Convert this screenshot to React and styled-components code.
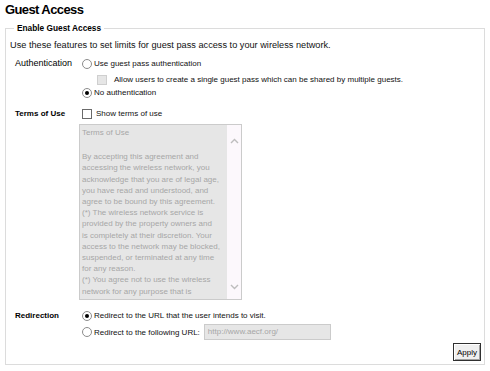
import React from "react";
import styled, { createGlobalStyle } from "styled-components";

const GlobalStyle = createGlobalStyle`
  body {
    margin: 0;
    background: #fff;
    color: #111;
    font-family: "Liberation Sans", Arial, sans-serif;
  }
`;

const Page = styled.div`
  width: 490px;
  height: 371px;
  overflow: hidden;
`;

const Title = styled.h1`
  margin: 0;
  padding: 0 5px;
  font-size: 13px;
  line-height: 20px;
  font-weight: bold;
  letter-spacing: -0.6px;
  color: #000;
`;

const Fieldset = styled.fieldset`
  margin: 2px 5px 0;
  padding: 5px 3px 3px 4px;
  border: 1px solid #dcdcdc;
  min-width: 0;
`;

const Legend = styled.legend`
  margin-left: 4px;
  padding: 0 3px;
  font-size: 8.3px;
  line-height: 12px;
  font-weight: bold;
  color: #000;
`;

const Intro = styled.div`
  font-size: 9.2px;
  line-height: 12px;
`;

const Row = styled.div`
  display: flex;
  padding-left: 5px;
  margin-top: ${(p) => p.$mt || 0}px;
`;

const Label = styled.div`
  width: 67px;
  flex: none;
  font-size: ${(p) => (p.$bold ? "8px" : "9px")};
  font-weight: ${(p) => (p.$bold ? "bold" : "normal")};
  line-height: 13px;
  color: #000;
`;

const Controls = styled.div`
  display: flex;
  flex-direction: column;
`;

const Option = styled.div`
  display: flex;
  align-items: center;
  height: ${(p) => p.$h || 13}px;
  margin-top: ${(p) => p.$mt || 0}px;
  margin-left: ${(p) => p.$indent || 0}px;
  font-size: 8px;
  white-space: nowrap;
`;

const Radio = styled.span`
  box-sizing: border-box;
  width: 10px;
  height: 10px;
  flex: none;
  margin-right: 2px;
  border: 1px solid #8c8c8c;
  border-radius: 50%;
  background: #fff;
  display: grid;
  place-items: center;

  &::after {
    content: "";
    display: ${(p) => (p.$checked ? "block" : "none")};
    width: 4px;
    height: 4px;
    border-radius: 50%;
    background: #000;
  }
`;

const Check = styled.span`
  box-sizing: border-box;
  width: 10px;
  height: 10px;
  flex: none;
  margin-right: ${(p) => p.$gap || 4}px;
  border: 1px solid ${(p) => (p.$disabled ? "#cfcfcf" : "#6a6a6a")};
  background: ${(p) => (p.$disabled ? "#e6e6e6" : "#fff")};
`;

const TermsBox = styled.div`
  display: flex;
  width: 163px;
  height: 176px;
  box-sizing: border-box;
  margin: 4px 0 0 -3px;
  border: 1px solid #cbcbcb;
  background: #e6e6e6;
  overflow: hidden;
`;

const TermsText = styled.div`
  flex: 1;
  padding: 2px 0 0 2px;
  font-size: 8px;
  line-height: 11.2px;
  color: #a6a6a6;
  white-space: pre-line;
`;

const TermsBody = styled.div`
  margin-top: 13px;
`;

const Scroll = styled.div`
  width: 14px;
  flex: none;
  background: #fcf8fc;
  display: flex;
  flex-direction: column;
  justify-content: space-between;
  align-items: center;
  padding: 13px 0 9px;
`;

const UrlInput = styled.div`
  box-sizing: border-box;
  width: 127px;
  height: 16px;
  margin-left: 4px;
  padding-left: 3px;
  border: 1px solid #cbcbcb;
  background: #e6e6e6;
  color: #a6a6a6;
  font-size: 8px;
  line-height: 14px;
`;

const Footer = styled.div`
  display: flex;
  justify-content: flex-end;
  margin-top: 3px;
`;

const Button = styled.button`
  box-sizing: border-box;
  width: 28px;
  height: 18px;
  padding: 0;
  border: 1px solid #303030;
  background: #efefef;
  box-shadow: inset 1px 1px 0 #fff, inset -1px -1px 0 #a0a0a0;
  font-family: "Liberation Sans", Arial, sans-serif;
  font-size: 8px;
  color: #000;
`;

const Chevron = ({ up }) => (
  <svg width="9" height="6" viewBox="0 0 9 6">
    <polyline
      points={up ? "1,5 4.5,1.5 8,5" : "1,1 4.5,4.5 8,1"}
      fill="none"
      stroke="#bdbdbd"
      strokeWidth="1.4"
    />
  </svg>
);

const terms = `By accepting this agreement and
accessing the wireless network, you
acknowledge that you are of legal age,
you have read and understood, and
agree to be bound by this agreement.
(*) The wireless network service is
provided by the property owners and
is completely at their discretion. Your
access to the network may be blocked,
suspended, or terminated at any time
for any reason.
(*) You agree not to use the wireless
network for any purpose that is`;

export default function App() {
  return (
    <Page>
      <GlobalStyle />
      <Title>Guest Access</Title>
      <Fieldset>
        <Legend>Enable Guest Access</Legend>
        <Intro>
          Use these features to set limits for guest pass access to your wireless network.
        </Intro>

        <Row $mt={6}>
          <Label>Authentication</Label>
          <Controls>
            <Option>
              <Radio />
              Use guest pass authentication
            </Option>
            <Option $mt={3} $indent={15}>
              <Check $disabled $gap={7} />
              Allow users to create a single guest pass which can be shared by multiple guests.
            </Option>
            <Option>
              <Radio $checked />
              No authentication
            </Option>
          </Controls>
        </Row>

        <Row $mt={8}>
          <Label $bold>Terms of Use</Label>
          <Controls>
            <Option>
              <Check />
              Show terms of use
            </Option>
            <TermsBox>
              <TermsText>
                Terms of Use
                <TermsBody>{terms}</TermsBody>
              </TermsText>
              <Scroll>
                <Chevron up />
                <Chevron />
              </Scroll>
            </TermsBox>
          </Controls>
        </Row>

        <Row $mt={9}>
          <Label $bold>Redirection</Label>
          <Controls>
            <Option>
              <Radio $checked />
              Redirect to the URL that the user intends to visit.
            </Option>
            <Option $h={16} $mt={2}>
              <Radio />
              Redirect to the following URL:
              <UrlInput>http://www.aecf.org/</UrlInput>
            </Option>
          </Controls>
        </Row>

        <Footer>
          <Button>Apply</Button>
        </Footer>
      </Fieldset>
    </Page>
  );
}
